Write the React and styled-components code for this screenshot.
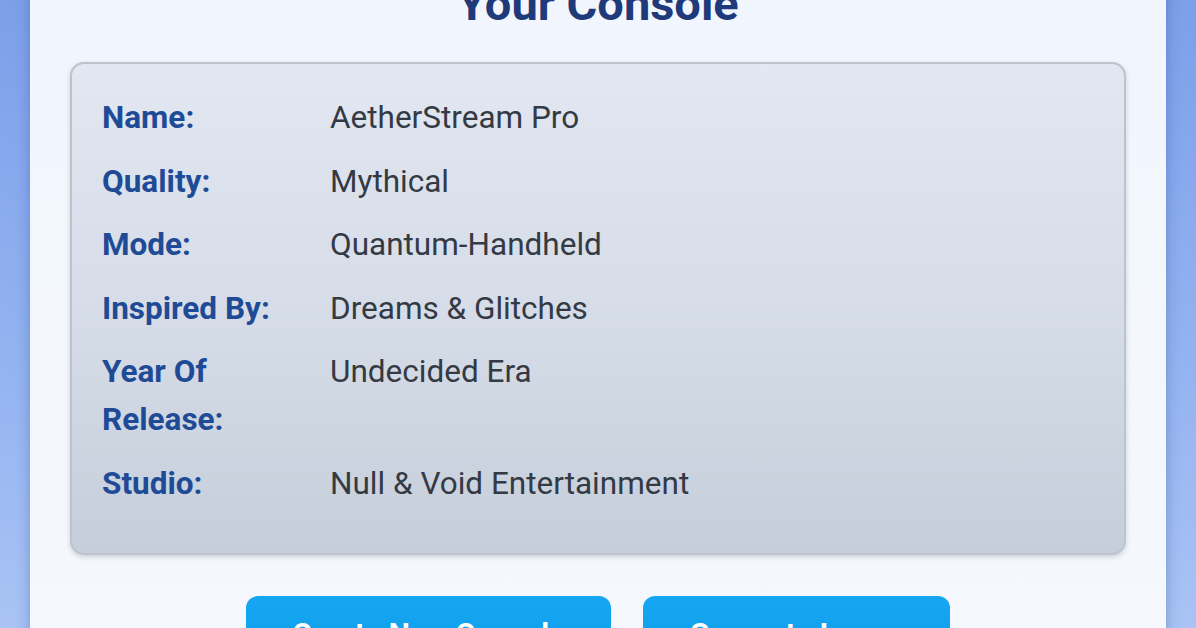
import React from 'react'
import styled, { createGlobalStyle } from 'styled-components'

const GlobalStyle = createGlobalStyle`
    html, body {
        margin: 0;
        padding: 0;
    }
    body {
        font-family: Roboto, "Noto Sans", "Liberation Sans", sans-serif;
    }
`;

const consoleInfo = [
    { label: 'Name:', value: 'AetherStream Pro' },
    { label: 'Quality:', value: 'Mythical' },
    { label: 'Mode:', value: 'Quantum-Handheld' },
    { label: 'Inspired By:', value: 'Dreams & Glitches' },
    { label: 'Year Of Release:', value: 'Undecided Era' },
    { label: 'Studio:', value: 'Null & Void Entertainment' },
];

export default function App() {
    return (
        <Page>
            <GlobalStyle />
            <Card>
                <Title>Your Console</Title>

                <InfoPanel>
                    {consoleInfo.map(item => (
                        <InfoRow key={item.label}>
                            <Label>{item.label}</Label>
                            <Value>{item.value}</Value>
                        </InfoRow>
                    ))}
                </InfoPanel>

                <Actions>
                    <ActionButton>Create New Console</ActionButton>
                    <ActionButton>Generate Image</ActionButton>
                </Actions>
            </Card>
        </Page>
    )
}

const Page = styled.div`
    height: 628px;
    overflow: hidden;
    padding: 0 30px;
    box-sizing: border-box;
    background: linear-gradient(180deg, #7d9fe9 0%, #94b4f1 60%, #a9c3f4 100%);
`;

const Card = styled.div`
    margin-top: -48px;
    padding: 24px 40px 40px;
    background: linear-gradient(180deg, #f1f5fd 0%, #f5f8fd 100%);
    box-shadow: 0 0 14px rgba(40, 70, 150, 0.35);
    border-radius: 0 0 16px 16px;
`;

const Title = styled.h1`
    margin: 0 0 30px;
    text-align: center;
    font-size: 47px;
    line-height: 56px;
    font-weight: 700;
    color: #1f3a7a;
`;

const InfoPanel = styled.div`
    padding: 30px 30px 30px;
    border: 2px solid #bcc3cd;
    border-radius: 14px;
    background: linear-gradient(180deg, #e2e7f1 0%, #d6dde8 50%, #c6cedb 100%);
    box-shadow: 0 2px 5px rgba(60, 70, 90, 0.22);
`;

const InfoRow = styled.div`
    display: grid;
    grid-template-columns: 200px 1fr;
    column-gap: 28px;
    margin-bottom: 15.5px;
    font-size: 31.5px;
    line-height: 48px;
`;

const Label = styled.span`
    font-weight: 700;
    color: #1f4b96;
`;

const Value = styled.span`
    color: #343a44;
`;

const Actions = styled.div`
    display: flex;
    justify-content: center;
    gap: 32px;
    margin-top: 41px;
`;

const ActionButton = styled.button`
    padding: 20px 46px;
    border: none;
    border-radius: 12px;
    background: linear-gradient(180deg, #17a7f2 0%, #0a9be9 100%);
    color: #ffffff;
    font-family: inherit;
    font-size: 30px;
    font-weight: 700;
    cursor: pointer;
`;
